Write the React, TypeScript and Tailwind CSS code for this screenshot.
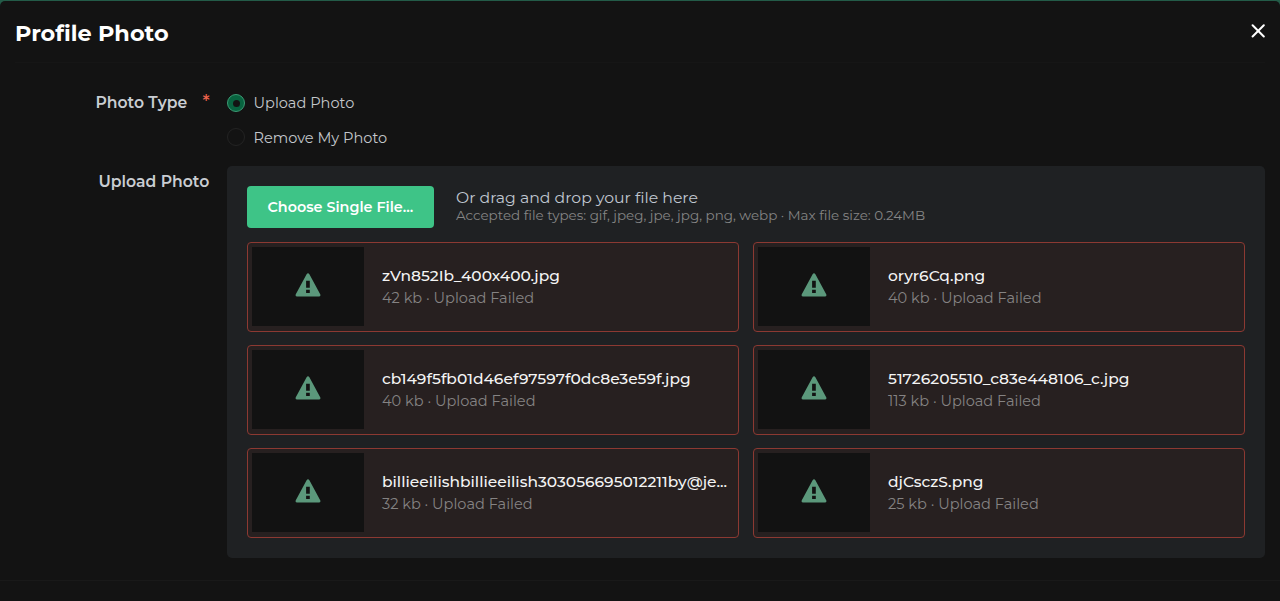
type FileItem = { name: string; size: string };

const files: FileItem[] = [
  { name: 'zVn852Ib_400x400.jpg', size: '42 kb' },
  { name: 'oryr6Cq.png', size: '40 kb' },
  { name: 'cb149f5fb01d46ef97597f0dc8e3e59f.jpg', size: '40 kb' },
  { name: '51726205510_c83e448106_c.jpg', size: '113 kb' },
  { name: 'billieeilishbillieeilish303056695012211by@je...', size: '32 kb' },
  { name: 'djCsczS.png', size: '25 kb' },
];

function WarningIcon() {
  return (
    <svg width="26" height="24" viewBox="0 0 26 24" fill="#5b987b" aria-hidden="true">
      <path
        fillRule="evenodd"
        d="M11.6 1.2Q13 -.6 14.4 1.2L25.2 21.2Q26.1 23.5 23.8 23.6H2.2Q-.1 23.5.8 21.2ZM11.1 7.8V14.7H14.8V7.8ZM11.1 16.8V20H14.8V16.8Z"
      />
    </svg>
  );
}

function FileCard({ file }: { file: FileItem }) {
  return (
    <div className="flex h-[90px] min-w-0 rounded-[4px] border border-[#8c3932] bg-[#272020] p-1">
      <div className="flex h-[79px] w-[112px] shrink-0 items-start justify-center bg-[#121212] pt-[26px]">
        <WarningIcon />
      </div>
      <div className="ml-[18px] mt-[18px] min-w-0 whitespace-nowrap">
        <div className="text-[15.47px] font-medium leading-[21px] text-[#f4f4f4]">{file.name}</div>
        <div className="mt-px text-[14.55px] leading-[22px] text-[#858383]">{file.size} · Upload Failed</div>
      </div>
    </div>
  );
}

export default function App() {
  return (
    <div className="h-[601px] w-[1280px] overflow-hidden bg-[#235b48] pt-px font-[Montserrat,Inter,sans-serif]">
      <div className="flex h-[600px] flex-col rounded-t-[5px] bg-[#131313]">
        <header className="mx-[15px] flex h-[62px] shrink-0 items-start justify-between border-b border-[#161616]">
          <h1 className="mt-[17px] whitespace-nowrap text-[22.4px] font-bold leading-[30px] text-white">Profile Photo</h1>
          <svg className="mt-[23px]" width="14" height="14" viewBox="0 0 14 14" stroke="#fff" strokeWidth="2" strokeLinecap="round" aria-label="Close">
            <path d="M1.6 1.3 12.8 12.5M12.8 1.3 1.6 12.5" />
          </svg>
        </header>

        <div className="mt-[26px] flex h-[77px] shrink-0">
          <div className="flex w-[227px] whitespace-nowrap pl-[95.5px] pt-[2px] text-[#c9cdd2]">
            <span className="w-[107px] text-[15.6px] font-semibold leading-[24px]">Photo Type</span>
            <span className="text-[18px] font-medium leading-[23px] text-[#f0644d]">*</span>
          </div>
          <div className="whitespace-nowrap text-[14.55px] text-[#c3c7cb]">
            <div className="flex h-[28px] items-center">
              <span className="flex size-[18px] items-center justify-center rounded-full border border-[#3c9a74] bg-[#08633f]">
                <span className="size-[7px] rounded-full bg-[#131313]" />
              </span>
              <span className="ml-[8.5px] pt-[2px]">Upload Photo</span>
            </div>
            <div className="mt-[6px] flex h-[28px] items-center">
              <span className="size-[18px] rounded-full border border-[#232323]" />
              <span className="ml-[8.5px] pt-[3px]">Remove My Photo</span>
            </div>
          </div>
        </div>

        <div className="flex h-[415px] shrink-0 border-b border-[#191919]">
          <div className="w-[227px] whitespace-nowrap pl-[98.5px] pt-[4px] text-[15.65px] font-semibold leading-[24px] text-[#c9cdd2]">
            <span>Upload Photo</span>
          </div>
          <div className="h-[392px] w-[1038px] rounded-[5px] bg-[#1f2123] p-5">
            <div className="flex h-[42px] items-center">
              <button className="h-[42px] w-[187px] whitespace-nowrap rounded-[4px] bg-[#3ec487] pl-[20.5px] pt-[2px] text-left text-[14.35px] font-semibold text-white">
                Choose Single File...
              </button>
              <div className="ml-[22px] -mt-[4px] whitespace-nowrap">
                <div className="text-[15.7px] leading-[19px] text-[#c0c7d0]">Or drag and drop your file here</div>
                <div className="text-[13.46px] leading-[16px] text-[#858585]">
                  Accepted file types: gif, jpeg, jpe, jpg, png, webp · Max file size: 0.24MB
                </div>
              </div>
            </div>
            <div className="mt-[14px] grid grid-cols-2 gap-x-[14px] gap-y-[13px]">
              {files.map((file) => (
                <FileCard key={file.name} file={file} />
              ))}
            </div>
          </div>
        </div>
      </div>
    </div>
  );
}
